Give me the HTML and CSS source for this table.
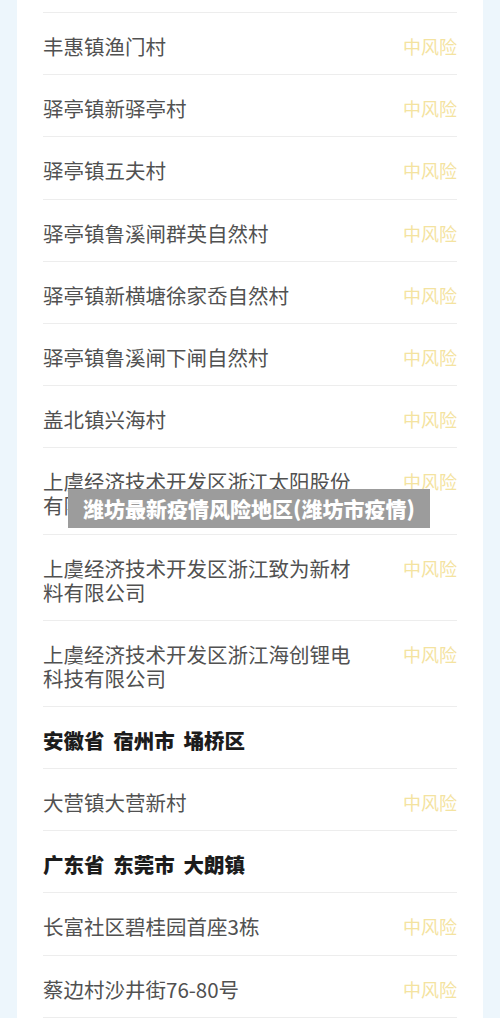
FILE: index.html
```html
<!DOCTYPE html>
<html lang="zh-CN">
<head>
  <meta charset="UTF-8" />
  <meta name="viewport" content="width=device-width, initial-scale=1.0"/>
  <title>潍坊最新疫情风险地区</title>
  <link rel="stylesheet" href="styles.css">
</head>
<body>
  <div class="card">
    <div class="row top"></div>

    <div class="row"><span class="name">丰惠镇渔门村</span><span class="risk">中风险</span></div>
    <div class="row"><span class="name">驿亭镇新驿亭村</span><span class="risk">中风险</span></div>
    <div class="row"><span class="name">驿亭镇五夫村</span><span class="risk">中风险</span></div>
    <div class="row"><span class="name">驿亭镇鲁溪闸群英自然村</span><span class="risk">中风险</span></div>
    <div class="row"><span class="name">驿亭镇新横塘徐家岙自然村</span><span class="risk">中风险</span></div>
    <div class="row"><span class="name">驿亭镇鲁溪闸下闸自然村</span><span class="risk">中风险</span></div>
    <div class="row"><span class="name">盖北镇兴海村</span><span class="risk">中风险</span></div>
    <div class="row"><span class="name">上虞经济技术开发区浙江太阳股份有限公司</span><span class="risk">中风险</span></div>
    <div class="row"><span class="name">上虞经济技术开发区浙江致为新材料有限公司</span><span class="risk">中风险</span></div>
    <div class="row"><span class="name">上虞经济技术开发区浙江海创锂电科技有限公司</span><span class="risk">中风险</span></div>

    <div class="row region">安徽省 宿州市 埇桥区</div>
    <div class="row"><span class="name">大营镇大营新村</span><span class="risk">中风险</span></div>

    <div class="row region">广东省 东莞市 大朗镇</div>
    <div class="row"><span class="name">长富社区碧桂园首座3栋</span><span class="risk">中风险</span></div>
    <div class="row"><span class="name">蔡边村沙井街76-80号</span><span class="risk">中风险</span></div>
  </div>

  <div class="caption">潍坊最新疫情风险地区(潍坊市疫情)</div>
</body>
</html>
```

FILE: styles.css
```css
body {
  margin: 0;
  font-family: "Noto Sans CJK SC", "Noto Sans", sans-serif;
  background-color: #edf6fc;
  height: 1018px;
  overflow: hidden;
  position: relative;
}

.card {
  background-color: #fff;
  margin: 0 17px;
  padding: 0 26px;
  height: 1018px;
}

.row {
  display: flex;
  justify-content: space-between;
  align-items: flex-start;
  padding: 21px 0 16.2px;
  border-bottom: 1px solid #ededed;
  line-height: 24px;
}

.row.top {
  padding: 0;
  height: 12px;
}

.name {
  max-width: 318px;
  font-size: 20.5px;
  color: #515151;
}

.risk {
  font-size: 18px;
  color: #f4e3a0;
}

.region {
  font-size: 20.5px;
  font-weight: 900;
  color: #1c1c1c;
  word-spacing: 4px;
}

.caption {
  position: absolute;
  left: 68px;
  top: 489px;
  width: 362px;
  height: 39px;
  background-color: #9c9c9c;
  color: #fff;
  font-size: 21px;
  font-weight: 900;
  line-height: 39px;
  text-align: center;
}
```
